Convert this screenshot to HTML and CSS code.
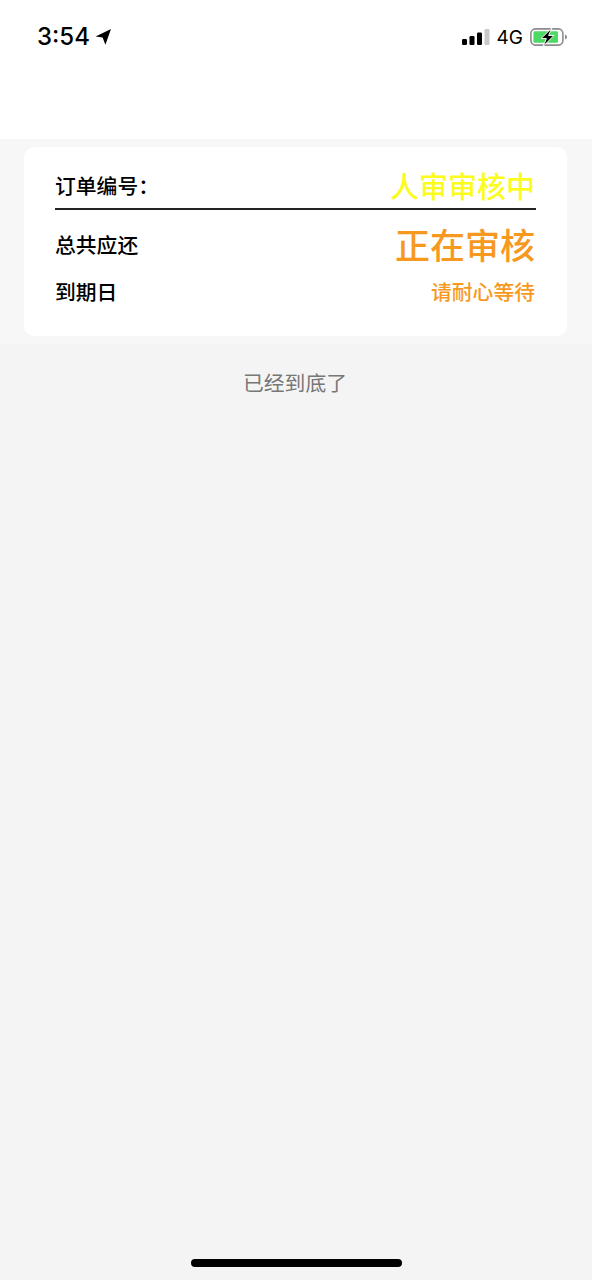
FILE: index.html
```html
<!DOCTYPE html>
<html lang="zh-CN">
<head>
    <meta charset="UTF-8">
    <meta name="viewport" content="width=device-width, initial-scale=1.0">
    <title>订单</title>
    <link rel="stylesheet" href="styles.css">
</head>
<body>
    <!-- Status bar and empty nav area -->
    <div class="header">
        <div class="status-bar">
            <div class="status-left">
                <span class="time">3:54</span>
                <svg class="location-icon" width="17" height="18" viewBox="0 0 17 18">
                    <path d="M16 1 L0.6 8.4 L7.6 9.6 L10.4 16.8 Z" fill="#000"/>
                </svg>
            </div>
            <div class="status-right">
                <svg class="signal-icon" width="28" height="18" viewBox="0 0 28 18">
                    <rect x="0" y="11" width="5" height="6" rx="1.2" fill="#000"/>
                    <rect x="7.5" y="8" width="5" height="9" rx="1.2" fill="#000"/>
                    <rect x="15" y="4.5" width="5" height="12.5" rx="1.2" fill="#000"/>
                    <rect x="22.5" y="1" width="5" height="16" rx="1.2" fill="#c8c8c8"/>
                </svg>
                <span class="network">4G</span>
                <svg class="battery-icon" width="38" height="20" viewBox="0 0 38 20">
                    <rect x="0.9" y="1.9" width="32" height="16.2" rx="4.5" fill="none" stroke="#8c8c8c" stroke-width="1.6"/>
                    <rect x="3.4" y="4.2" width="24.6" height="11.6" rx="1.5" fill="#4cd964"/>
                    <path d="M35 7.5 C36.4 8 37 9 37 10 C37 11 36.4 12 35 12.5 Z" fill="#8c8c8c"/>
                    <path d="M22 0.8 L11 11.6 L16.4 11.6 L13 19.6 L24 8.4 L18.6 8.4 Z" fill="#000" stroke="#fff" stroke-width="1"/>
                </svg>
            </div>
        </div>
    </div>

    <div class="list">
        <div class="order-card">
            <div class="order-head">
                <span class="label">订单编号：</span>
                <span class="order-state">人审审核中</span>
            </div>
            <div class="order-row order-row-total">
                <span class="label">总共应还</span>
                <span class="order-amount">正在审核</span>
            </div>
            <div class="order-row">
                <span class="label">到期日</span>
                <span class="order-date">请耐心等待</span>
            </div>
        </div>
    </div>

    <p class="list-end">已经到底了</p>

    <div class="home-indicator"></div>
</body>
</html>
```

FILE: styles.css
```css
:root {
    --bg-page: #f4f4f4;
    --bg-list: #f7f7f7;
    --orange: #f7981f;
    --yellow: #fbfb1e;
    --cjk: "Noto Sans CJK SC", "Noto Sans", sans-serif;
}

* {
    box-sizing: border-box;
    margin: 0;
    padding: 0;
}

html, body {
    height: 100%;
}

body {
    display: flex;
    flex-direction: column;
    background-color: var(--bg-page);
    color: #000;
    font-family: var(--cjk);
    font-weight: 500;
}

.header {
    height: 139px;
    flex-shrink: 0;
    padding-top: 19px;
    background-color: #fff;
}

.status-bar {
    display: flex;
    justify-content: space-between;
    align-items: center;
    height: 36px;
    padding: 0 24px 0 37px;
}

.status-left,
.status-right {
    display: flex;
    align-items: center;
}

.time {
    font-family: Inter, sans-serif;
    font-size: 24px;
    font-weight: 500;
    line-height: 36px;
}

.location-icon {
    margin-left: 5px;
}

.network {
    font-family: Inter, sans-serif;
    font-size: 19px;
    font-weight: 400;
    margin: 0 7px;
}

.signal-icon {
    margin-left: 1px;
}

.list {
    background-color: var(--bg-list);
    padding: 8px 25px 8px 24px;
}

.order-card {
    background-color: #fff;
    border-radius: 10px;
    height: 189px;
    padding: 0 31px;
}

.order-head {
    display: flex;
    justify-content: space-between;
    align-items: center;
    height: 63px;
    padding: 14px 1px 0 0;
    border-bottom: 2px solid #222;
}

.order-row {
    display: flex;
    justify-content: space-between;
    align-items: center;
    padding-right: 1px;
    height: 40px;
}

.order-row-total {
    height: 68px;
    margin-bottom: -7px;
}

.label {
    font-size: 20.8px;
    line-height: 30px;
}

.order-state {
    font-size: 29px;
    line-height: 40px;
    color: var(--yellow);
}

.order-amount {
    font-size: 35px;
    line-height: 48px;
    color: var(--orange);
}

.order-date {
    font-size: 20.8px;
    line-height: 30px;
    color: var(--orange);
}

.list-end {
    text-align: center;
    font-size: 20.8px;
    font-weight: 400;
    line-height: 30px;
    margin-top: 23px;
    padding-right: 2px;
    color: #777;
}

.home-indicator {
    width: 211px;
    height: 8px;
    border-radius: 4px;
    background-color: #000;
    margin: auto auto 13px 191px;
}
```
